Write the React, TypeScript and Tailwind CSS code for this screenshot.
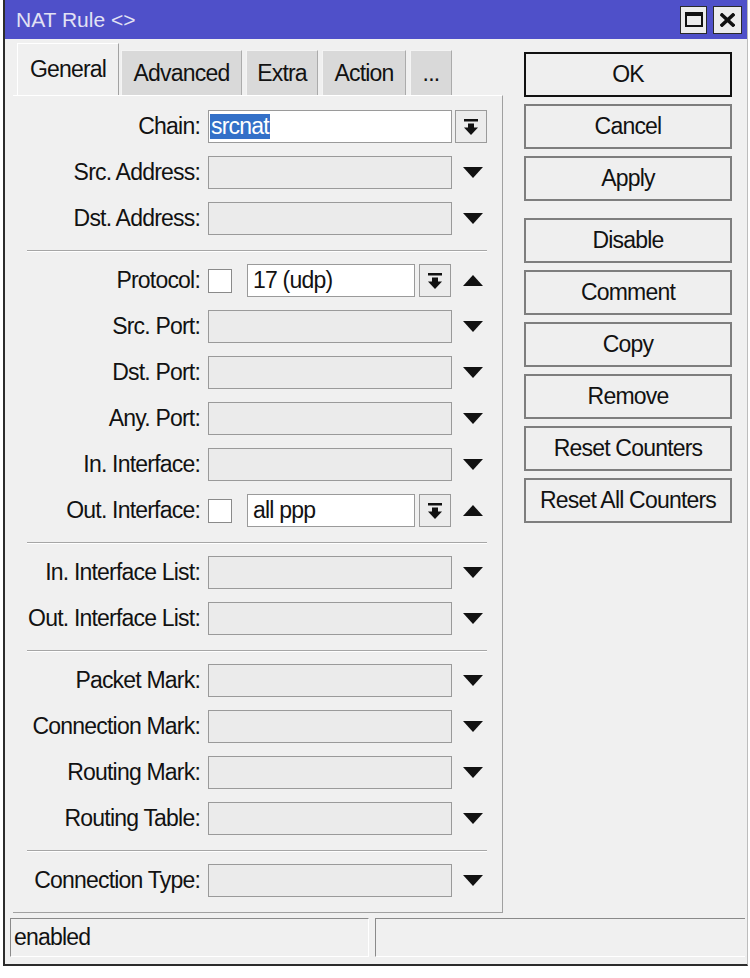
import React from "react";

const TriDown = () => (
  <svg width="20" height="11" viewBox="0 0 20 11">
    <polygon points="0,0 20,0 10,11" fill="#111" />
  </svg>
);

const TriUp = () => (
  <svg width="20" height="11" viewBox="0 0 20 11">
    <polygon points="0,11 20,11 10,0" fill="#111" />
  </svg>
);

const DropBtn = () => (
  <div className="w-[32px] h-[33px] shrink-0 border border-[#9a9a9a] bg-[#ececec] flex items-center justify-center">
    <svg width="14" height="16" viewBox="0 0 14 16">
      <rect x="0" y="0" width="14" height="2.5" fill="#111" />
      <rect x="4" y="4.5" width="6" height="4.5" fill="#111" />
      <polygon points="0,8.5 14,8.5 7,16" fill="#111" />
    </svg>
  </div>
);

const Field = ({ white = false, children }: { white?: boolean; children?: React.ReactNode }) => (
  <div
    className={`w-[244px] h-[33px] border border-[#9a9a9a] flex items-center ${white ? "bg-white" : "bg-[#ebebeb]"}`}
  >
    {children}
  </div>
);

const Row = ({
  label,
  children,
  slot,
}: {
  label: string;
  children: React.ReactNode;
  slot: React.ReactNode;
}) => (
  <div className="flex items-center h-[33px]">
    <div className="w-[188px] pr-[1px] text-right whitespace-nowrap">{label}</div>
    <div className="ml-[7px] w-[247px] h-full flex items-center">{children}</div>
    <div className="w-[32px] h-full flex items-center">{slot}</div>
  </div>
);

const DownSlot = () => (
  <div className="pl-[8px] flex items-center">
    <TriDown />
  </div>
);

const UpSlot = () => (
  <div className="pl-[8px] flex items-center">
    <TriUp />
  </div>
);

const SimpleRow = ({ label }: { label: string }) => (
  <Row label={label} slot={<DownSlot />}>
    <Field />
  </Row>
);

const CheckRow = ({ label, value }: { label: string; value: string }) => (
  <Row label={label} slot={<UpSlot />}>
    <div className="w-[24px] h-[24px] border border-[#8a8a8a] bg-white shrink-0" />
    <div className="ml-[15px] w-[168px] h-[33px] border border-[#9a9a9a] bg-white flex items-center pl-[5px] whitespace-nowrap">
      {value}
    </div>
    <div className="ml-[4px]">
      <DropBtn />
    </div>
  </Row>
);

const Sep = () => (
  <div className="mt-[15px] mb-[12px] ml-[14px] w-[460px] border-t border-t-[#a6a6a6] border-b border-b-white" />
);

const Group = ({ children }: { children: React.ReactNode }) => (
  <div className="flex flex-col gap-[13px]">{children}</div>
);

const Btn = ({ label, primary = false, extra = "" }: { label: string; primary?: boolean; extra?: string }) => (
  <div
    className={`w-[208px] h-[45px] flex items-center justify-center bg-[#efefef] ${
      primary ? "border-2 border-[#111]" : "border-2 border-[#7e7e7e]"
    } ${extra}`}
  >
    {label}
  </div>
);

const Tab = ({ label, w, ml }: { label: string; w: string; ml: string }) => (
  <div
    className={`${w} ${ml} h-[45px] bg-[#d9d9d9] border-t border-l border-t-[#f4f4f4] border-l-[#f4f4f4] border-r border-r-[#ababab] flex items-center justify-center`}
  >
    {label}
  </div>
);

export default function App() {
  return (
    <div className="w-[750px] h-[978px] bg-white font-['Liberation_Sans',Arial,sans-serif] text-[23px] tracking-[-0.8px] text-[#121212] leading-none">
      <div className="ml-[3px] w-[745px] h-[966px] border-l-2 border-b-2 border-l-[#2c2c2c] border-b-[#2c2c2c] border-r border-r-[#bdbdbd] bg-[#f0f0f0] flex flex-col">
        {/* Title bar */}
        <div className="h-[39px] shrink-0 bg-[#4f50c9] flex items-center pl-[11px] pr-[5px]">
          <div className="text-[21px] tracking-normal text-[#e2e2f4] whitespace-nowrap">NAT Rule &lt;&gt;</div>
          <div className="ml-auto flex items-center gap-[6px]">
            <div className="w-[27px] h-[28px] bg-[#ececec] border border-[#2a2a2a] flex items-center justify-center">
              <div className="w-[18px] h-[15px] border-2 border-t-4 border-[#111]" />
            </div>
            <div className="w-[29px] h-[28px] bg-[#ececec] border border-[#2a2a2a] flex items-center justify-center">
              <svg width="15" height="14" viewBox="0 0 15 14">
                <line x1="2" y1="2" x2="13" y2="12" stroke="#111" strokeWidth="3.6" strokeLinecap="square" />
                <line x1="13" y1="2" x2="2" y2="12" stroke="#111" strokeWidth="3.6" strokeLinecap="square" />
              </svg>
            </div>
          </div>
        </div>

        {/* Body */}
        <div className="flex">
          {/* Left column */}
          <div className="flex flex-col pt-[4px]">
            <div className="flex items-end h-[52px] ml-[12px]">
              <div className="w-[102px] h-[52px] bg-[#f0f0f0] border-t border-l border-t-white border-l-white border-r border-r-[#a2a2a2] flex items-center justify-center">
                General
              </div>
              <Tab label="Advanced" w="w-[121px]" ml="ml-[2px]" />
              <Tab label="Extra" w="w-[72px]" ml="ml-[4px]" />
              <Tab label="Action" w="w-[84px]" ml="ml-[4px]" />
              <Tab label="..." w="w-[42px]" ml="ml-[4px]" />
            </div>
            <div className="ml-[8px] w-[490px] border-t border-t-white border-r border-b border-r-[#a0a0a0] border-b-[#a0a0a0] pt-[14px] pb-[15px]">
              <Group>
                <Row label="Chain:" slot={<DropBtn />}>
                  <Field white>
                    <span className="ml-[1px] h-[25px] px-[1px] bg-[#3370c8] text-white flex items-center">srcnat</span>
                  </Field>
                </Row>
                <SimpleRow label="Src. Address:" />
                <SimpleRow label="Dst. Address:" />
              </Group>
              <Sep />
              <Group>
                <CheckRow label="Protocol:" value="17 (udp)" />
                <SimpleRow label="Src. Port:" />
                <SimpleRow label="Dst. Port:" />
                <SimpleRow label="Any. Port:" />
                <SimpleRow label="In. Interface:" />
                <CheckRow label="Out. Interface:" value="all ppp" />
              </Group>
              <Sep />
              <Group>
                <SimpleRow label="In. Interface List:" />
                <SimpleRow label="Out. Interface List:" />
              </Group>
              <Sep />
              <Group>
                <SimpleRow label="Packet Mark:" />
                <SimpleRow label="Connection Mark:" />
                <SimpleRow label="Routing Mark:" />
                <SimpleRow label="Routing Table:" />
              </Group>
              <Sep />
              <Group>
                <SimpleRow label="Connection Type:" />
              </Group>
            </div>
          </div>

          {/* Right column */}
          <div className="ml-[21px] pt-[13px] flex flex-col gap-[7px]">
            <Btn label="OK" primary />
            <Btn label="Cancel" />
            <Btn label="Apply" />
            <Btn label="Disable" extra="mt-[10px]" />
            <Btn label="Comment" />
            <Btn label="Copy" />
            <Btn label="Remove" />
            <Btn label="Reset Counters" />
            <Btn label="Reset All Counters" />
          </div>
        </div>

        {/* Status bar */}
        <div className="mt-[5px] ml-[5px] h-[39px] flex gap-[6px]">
          <div className="w-[359px] h-full border-t border-l border-t-[#8a8a8a] border-l-[#8a8a8a] border-b border-r border-b-white border-r-white flex items-center pl-[3px]">
            enabled
          </div>
          <div className="w-[370px] h-full border-t border-l border-t-[#8a8a8a] border-l-[#8a8a8a] border-b border-b-white" />
        </div>
      </div>
    </div>
  );
}
